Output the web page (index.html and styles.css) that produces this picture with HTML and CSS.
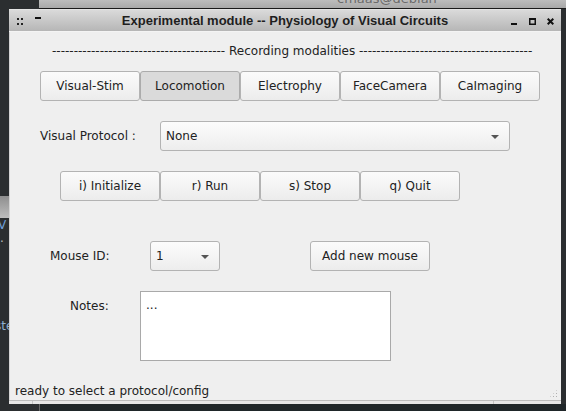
FILE: index.html
```html
<!DOCTYPE html>
<html>
<head>
<meta charset="utf-8">
<link rel="stylesheet" href="styles.css">
</head>
<body>
<div class="desktop">
  <div class="bg-bar"><span class="bg-title">cmaas@debian</span></div>
  <div class="bg-left-bar"></div>
  <div class="bg-left-text t1">V</div>
  <div class="bg-left-text t2">.</div>
  <div class="bg-left-text t3">ste</div>
  <div class="bg-bottom"></div>

  <div class="window">
    <div class="titlebar">
      <div class="tb-left">
        <svg width="6" height="7" viewBox="0 0 6 7" class="ico-dots"><rect x="0" y="0" width="2" height="2" fill="#222"/><rect x="4" y="0" width="2" height="2" fill="#222"/><rect x="0" y="5" width="2" height="2" fill="#222"/><rect x="4" y="5" width="2" height="2" fill="#222"/></svg>
        <svg width="6" height="7" viewBox="0 0 6 7" class="ico-shade"><rect x="0" y="0" width="6" height="2" fill="#111"/></svg>
      </div>
      <div class="tb-title">Experimental module -- Physiology of Visual Circuits</div>
      <div class="tb-right">
        <svg width="7" height="7" viewBox="0 0 7 7" class="ico-min"><rect x="0" y="5" width="6" height="2" fill="#111"/></svg>
        <svg width="7" height="7" viewBox="0 0 7 7" class="ico-max"><rect x="0.75" y="0.75" width="5.5" height="5.5" fill="none" stroke="#111" stroke-width="1.5"/><rect x="0" y="0" width="7" height="2" fill="#111"/></svg>
        <svg width="7" height="7" viewBox="0 0 7 7" class="ico-close"><path d="M0.7 0.7 L6.3 6.3 M6.3 0.7 L0.7 6.3" stroke="#111" stroke-width="2"/></svg>
      </div>
    </div>
    <div class="content">
      <div class="section-title">---------------------------------------- Recording modalities ----------------------------------------</div>
      <div class="row modalities">
        <div class="btn">Visual-Stim</div>
        <div class="btn pressed">Locomotion</div>
        <div class="btn">Electrophy</div>
        <div class="btn">FaceCamera</div>
        <div class="btn">CaImaging</div>
      </div>
      <div class="row protocol">
        <div class="label lbl-protocol">Visual Protocol :</div>
        <div class="combo combo-protocol"><span>None</span><span class="arrow"></span></div>
      </div>
      <div class="row actions">
        <div class="btn">i) Initialize</div>
        <div class="btn">r) Run</div>
        <div class="btn">s) Stop</div>
        <div class="btn">q) Quit</div>
      </div>
      <div class="row mouse">
        <div class="label lbl-mouse">Mouse ID:</div>
        <div class="combo combo-mouse"><span>1</span><span class="arrow"></span></div>
        <div class="btn btn-add">Add new mouse</div>
      </div>
      <div class="row notes">
        <div class="label lbl-notes">Notes:</div>
        <div class="textbox">...</div>
      </div>
      <div class="status">ready to select a protocol/config</div>
      <div class="grip"></div>
    </div>
    <div class="bottom-frame">
      <div class="seg seg1"></div>
      <div class="seg seg2"></div>
      <div class="seg seg3"></div>
    </div>
  </div>
</div>
</body>
</html>
```

FILE: styles.css
```css
html, body {
  margin: 0;
  padding: 0;
}
body {
  background: #2b2f31;
  font-family: "DejaVu Sans", sans-serif;
  font-size: 12px;
  color: #222;
}
.desktop {
  position: relative;
  width: 566px;
  height: 411px;
  overflow: hidden;
  background: #2b2e30;
}
.bg-bar {
  position: absolute;
  left: 39px;
  top: 0;
  width: 527px;
  height: 8px;
  background: linear-gradient(#bdbdbd, #a9a9a9);
  border-bottom: 1px solid #1a1a1a;
  overflow: hidden;
}
.bg-title {
  position: absolute;
  left: 298px;
  top: -9px;
  font-family: "DejaVu Sans", sans-serif;
  font-size: 13px;
  color: #6a6a6a;
}
.bg-left-bar {
  position: absolute;
  left: 0;
  top: 196px;
  width: 9px;
  height: 22px;
  background: linear-gradient(#8e8e8e, #bdbdbd);
}
.bg-left-text {
  position: absolute;
  left: -2px;
  font-size: 12px;
  line-height: 12px;
  color: #6f9fd8;
}
.t1 { top: 219px; }
.t2 { top: 232px; left: 0; color: #bbb; }
.t3 { top: 320px; left: -5px; color: #8fb0d0; }
.bg-bottom {
  position: absolute;
  left: 39px;
  top: 404px;
  width: 527px;
  height: 7px;
  background: #1f2629;
  border-left: 1px solid #666;
}
.window {
  position: absolute;
  left: 9px;
  top: 9px;
  width: 552px;
  height: 395px;
  display: flex;
  flex-direction: column;
  background: #efefef;
}
.titlebar {
  flex: none;
  box-sizing: border-box;
  height: 23px;
  display: grid;
  grid-template-columns: 1fr auto 1fr;
  align-items: center;
  background: linear-gradient(#dadada, #b6b6b6);
  border-top: 1px solid #e4e4e4;
  border-bottom: 1px solid #f4f4f4;
}
.tb-left {
  display: flex;
  align-items: flex-start;
  gap: 12px;
  padding-left: 8px;
  margin-top: 2px;
}
.ico-shade { margin-top: -1px; }
.tb-title {
  text-align: center;
  font-family: "Liberation Sans", Arial, sans-serif;
  font-weight: bold;
  font-size: 13px;
  color: #1e1e1e;
  white-space: nowrap;
}
.tb-right {
  display: flex;
  justify-content: flex-end;
  align-items: center;
  gap: 11px;
  padding-right: 7px;
  margin-top: 2px;
}
.content {
  flex: 1;
  display: flex;
  flex-direction: column;
  border-left: 1px solid #d4d4d4;
  position: relative;
}
.section-title {
  margin-top: 11px;
  line-height: 16px;
  padding-left: 42px;
  white-space: nowrap;
}
.row {
  display: flex;
  align-items: center;
}
.btn {
  box-sizing: border-box;
  width: 100px;
  height: 30px;
  display: flex;
  align-items: center;
  justify-content: center;
  background: linear-gradient(#fbfbfb, #ececec);
  border: 1px solid #b3b3b3;
  border-radius: 3px;
  white-space: nowrap;
}
.btn.pressed {
  background: #dadada;
  border-color: #ababab;
}
.modalities {
  margin-top: 12px;
  padding-left: 30px;
}
.protocol {
  margin-top: 20px;
  padding-left: 30px;
}
.label {
  white-space: nowrap;
}
.lbl-protocol { width: 120px; }
.combo {
  box-sizing: border-box;
  height: 30px;
  display: flex;
  align-items: center;
  justify-content: space-between;
  padding: 0 10px 0 5px;
  background: linear-gradient(#fcfcfc, #ededed);
  border: 1px solid #b3b3b3;
  border-radius: 3px;
}
.combo-protocol { width: 350px; }
.arrow {
  width: 0;
  height: 0;
  border-left: 4px solid transparent;
  border-right: 4px solid transparent;
  border-top: 4px solid #555;
  margin-top: 1px;
}
.actions {
  margin-top: 20px;
  padding-left: 50px;
}
.mouse {
  margin-top: 40px;
  padding-left: 40px;
}
.lbl-mouse { width: 100px; }
.combo-mouse { width: 70px; }
.btn-add {
  width: 120px;
  margin-left: 90px;
}
.notes {
  margin-top: 20px;
  padding-left: 60px;
  align-items: flex-start;
}
.lbl-notes {
  width: 70px;
  padding-top: 7px;
  line-height: 16px;
}
.textbox {
  box-sizing: border-box;
  width: 251px;
  height: 70px;
  background: #fff;
  border: 1px solid #a9a9a9;
  padding: 6px 0 0 5px;
  line-height: 14px;
  color: #222;
}
.status {
  margin-top: auto;
  padding-left: 5px;
  line-height: 16px;
  margin-bottom: 1px;
}
.grip {
  position: absolute;
  right: 3px;
  bottom: 2px;
  width: 9px;
  height: 9px;
  background:
    radial-gradient(circle, #b0b0b0 0.6px, transparent 0.9px) 0 0 / 3px 3px;
  clip-path: polygon(100% 0, 100% 100%, 0 100%);
}
.bottom-frame {
  flex: none;
  height: 3px;
  border-top: 1px solid #bcbcbc;
  background: #e6e6e6;
  display: flex;
}
.seg {
  height: 3px;
  border-right: 1px solid #c4c4c4;
}
.seg1 { width: 23px; }
.seg2 { width: 460px; }
.seg3 { flex: 1; border-right: none; }
```
